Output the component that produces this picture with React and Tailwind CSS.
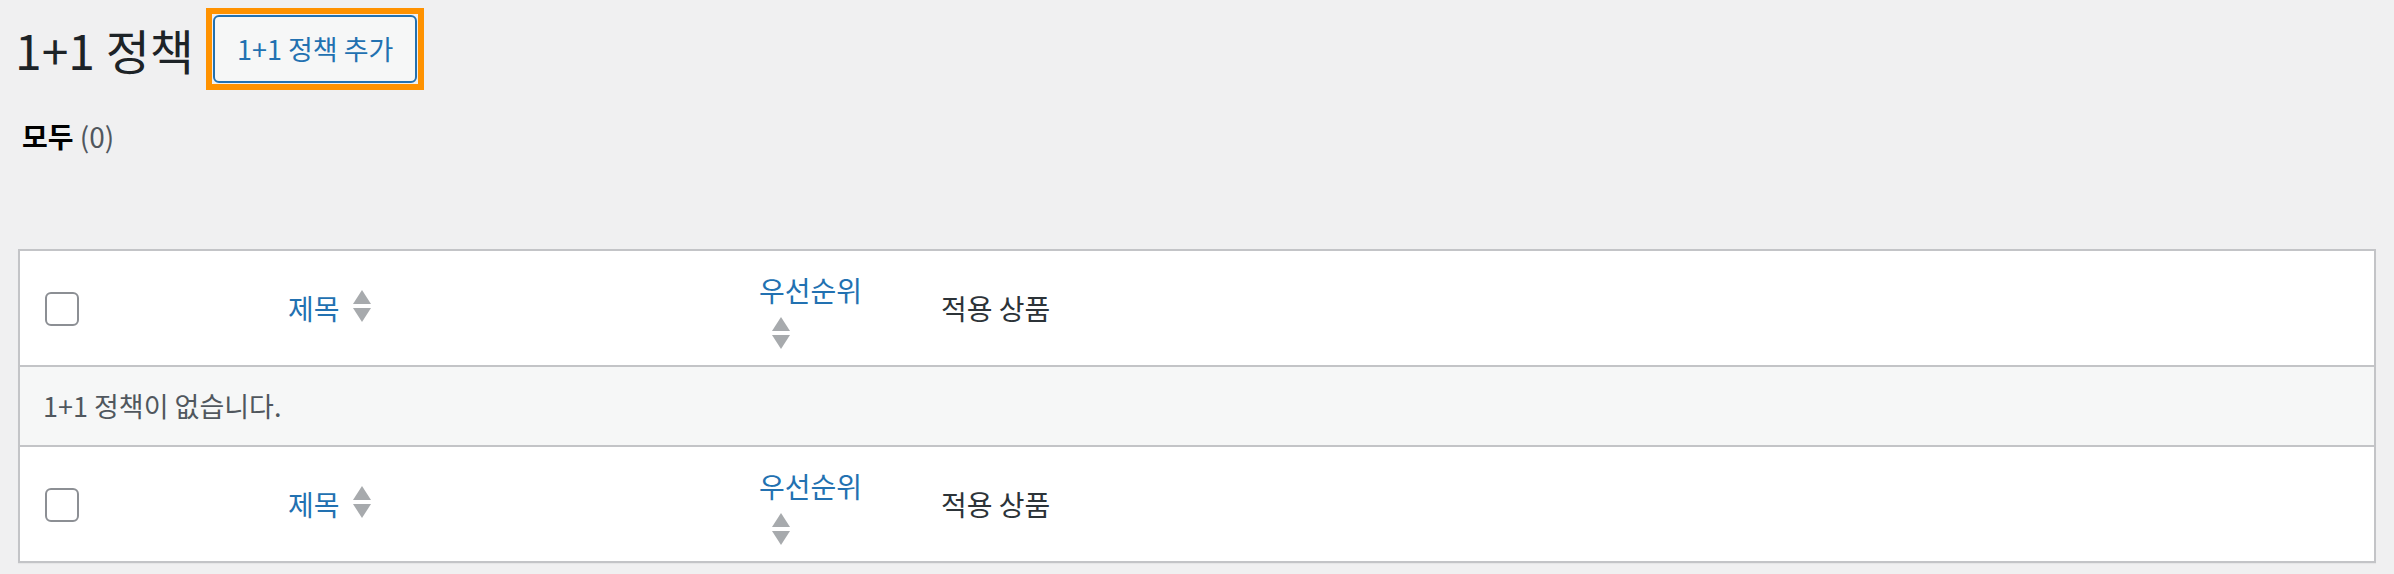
import React from "react";

const font = { fontFamily: "'Noto Sans CJK KR', 'Noto Sans', sans-serif" };

function SortArrows() {
  return (
    <svg width="18" height="32" viewBox="0 0 18 32" className="shrink-0">
      <polygon points="9,0 18,14 0,14" fill="#a7aaad" />
      <polygon points="0,18 18,18 9,32" fill="#a7aaad" />
    </svg>
  );
}

function Checkbox() {
  return <div className="w-[34px] h-[34px] rounded-[6px] border-2 border-[#8c8f94] bg-white" />;
}

function HeaderRow() {
  return (
    <div className="grid grid-cols-[248px_471px_182px_1fr] h-[114px] items-center bg-white">
      <div className="pl-[25px] pt-[2px]">
        <Checkbox />
      </div>
      <div className="pl-[20px] flex items-center">
        <span className="text-[28px] leading-[36px] text-[#2271b1]">제목</span>
        <span className="ml-[13px] -mt-[4px]">
          <SortArrows />
        </span>
      </div>
      <div className="pl-[20px] flex flex-col items-start pt-[4px]">
        <span className="text-[28px] leading-[36px] text-[#2271b1]">우선순위</span>
        <span className="ml-[13px] mt-[9px]">
          <SortArrows />
        </span>
      </div>
      <div className="pl-[20px]">
        <span className="text-[28px] leading-[36px] text-[#2c3338]">적용 상품</span>
      </div>
    </div>
  );
}

export default function App() {
  return (
    <div style={font} className="min-h-screen bg-[#f0f0f1] px-[18px] pt-[8px]">
      {/* Title */}
      <div className="flex items-center">
        <h1 className="text-[48px] leading-[60px] text-[#1d2327] font-normal -ml-[3px]">1+1 정책</h1>
        <div className="ml-[12px] border-[6px] border-[#ff9200] p-[1px]">
          <button className="h-[68px] px-[22px] rounded-[6px] border-2 border-[#2271b1] bg-[#f6f7f7] text-[27px] text-[#2271b1]">
            1+1 정책 추가
          </button>
        </div>
      </div>

      {/* Filter */}
      <div className="mt-[28px] ml-[4px] text-[28px] leading-[36px]">
        <span className="font-semibold text-black">모두</span>{" "}
        <span className="text-[#50575e]">(0)</span>
      </div>

      {/* Table */}
      <div className="mt-[95px] border-2 border-[#c3c4c7] bg-white shadow-[0_1px_1px_rgba(0,0,0,0.04)]">
        <HeaderRow />
        <div className="h-[82px] border-y-2 border-[#c3c4c7] bg-[#f6f7f7] flex items-center pl-[23px]">
          <span className="text-[27px] leading-[36px] text-[#50575e]">1+1 정책이 없습니다.</span>
        </div>
        <HeaderRow />
      </div>
    </div>
  );
}
